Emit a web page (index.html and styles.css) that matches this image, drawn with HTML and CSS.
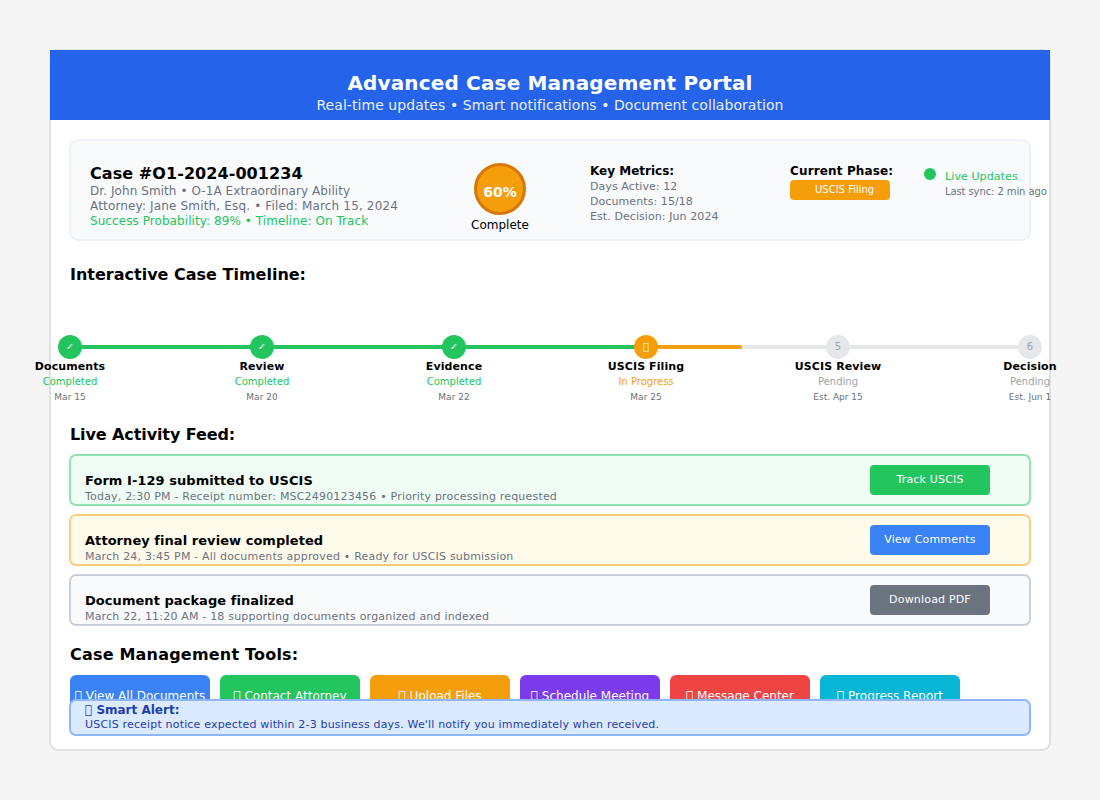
FILE: index.html
```html
<!DOCTYPE html>
<html lang="en">
<head>
<meta charset="UTF-8">
<meta name="viewport" content="width=device-width, initial-scale=1.0">
<title>Advanced Case Management Portal</title>
<link rel="stylesheet" href="styles.css">
</head>
<body>

<div class="portal">
  <header class="portal-header">
    <h1>Advanced Case Management Portal</h1>
    <p>Real-time updates • Smart notifications • Document collaboration</p>
  </header>

  <main class="portal-body">
    <section class="case-card">
      <div class="case-info">
        <h2>Case #O1-2024-001234</h2>
        <p>Dr. John Smith • O-1A Extraordinary Ability</p>
        <p class="case-attorney">Attorney: Jane Smith, Esq. • Filed: March 15, 2024</p>
        <p class="text-green">Success Probability: 89% • Timeline: On Track</p>
      </div>
      <div class="case-progress">
        <div class="progress-ring">60%</div>
        <div class="progress-label">Complete</div>
      </div>
      <div class="case-metrics">
        <h3>Key Metrics:</h3>
        <p>Days Active: 12</p>
        <p>Documents: 15/18</p>
        <p>Est. Decision: Jun 2024</p>
      </div>
      <div class="case-phase">
        <h3>Current Phase:</h3>
        <div class="phase-pill">USCIS Filing</div>
      </div>
      <div class="case-live">
        <span class="live-dot"></span>
        <div class="live-text">
          <div class="live-title">Live Updates</div>
          <div class="live-sync">Last sync: 2 min ago</div>
        </div>
      </div>
    </section>

    <h2 class="section-title title-timeline">Interactive Case Timeline:</h2>
    <section class="timeline">
      <div class="track track-done"></div>
      <div class="track track-active"></div>
      <div class="track track-pending"></div>

      <div class="step step-done">
        <div class="step-node">✓</div>
        <div class="step-name">Documents</div>
        <div class="step-status">Completed</div>
        <div class="step-date">Mar 15</div>
      </div>
      <div class="step step-done">
        <div class="step-node">✓</div>
        <div class="step-name">Review</div>
        <div class="step-status">Completed</div>
        <div class="step-date">Mar 20</div>
      </div>
      <div class="step step-done">
        <div class="step-node">✓</div>
        <div class="step-name">Evidence</div>
        <div class="step-status">Completed</div>
        <div class="step-date">Mar 22</div>
      </div>
      <div class="step step-active">
        <div class="step-node">&#xE000;</div>
        <div class="step-name">USCIS Filing</div>
        <div class="step-status">In Progress</div>
        <div class="step-date">Mar 25</div>
      </div>
      <div class="step step-pending">
        <div class="step-node">5</div>
        <div class="step-name">USCIS Review</div>
        <div class="step-status">Pending</div>
        <div class="step-date">Est. Apr 15</div>
      </div>
      <div class="step step-pending">
        <div class="step-node">6</div>
        <div class="step-name">Decision</div>
        <div class="step-status">Pending</div>
        <div class="step-date">Est. Jun 1</div>
      </div>
    </section>

    <h2 class="section-title title-feed">Live Activity Feed:</h2>
    <section class="feed">
      <div class="feed-item feed-green">
        <div class="feed-text">
          <h4>Form I-129 submitted to USCIS</h4>
          <p>Today, 2:30 PM - Receipt number: MSC2490123456 • Priority processing requested</p>
        </div>
        <button class="feed-btn btn-green">Track USCIS</button>
      </div>
      <div class="feed-item feed-yellow">
        <div class="feed-text">
          <h4>Attorney final review completed</h4>
          <p>March 24, 3:45 PM - All documents approved • Ready for USCIS submission</p>
        </div>
        <button class="feed-btn btn-blue">View Comments</button>
      </div>
      <div class="feed-item feed-gray">
        <div class="feed-text">
          <h4>Document package finalized</h4>
          <p>March 22, 11:20 AM - 18 supporting documents organized and indexed</p>
        </div>
        <button class="feed-btn btn-gray">Download PDF</button>
      </div>
    </section>

    <h2 class="section-title title-tools">Case Management Tools:</h2>
    <section class="tools">
      <button class="tool-btn btn-blue">&#xE000; View All Documents</button>
      <button class="tool-btn btn-green">&#xE000; Contact Attorney</button>
      <button class="tool-btn btn-orange">&#xE000; Upload Files</button>
      <button class="tool-btn btn-purple">&#xE000; Schedule Meeting</button>
      <button class="tool-btn btn-red">&#xE000; Message Center</button>
      <button class="tool-btn btn-cyan">&#xE000; Progress Report</button>
    </section>
  </main>

  <aside class="smart-alert">
    <div class="alert-title">&#xE000; Smart Alert:</div>
    <div class="alert-text">USCIS receipt notice expected within 2-3 business days. We'll notify you immediately when received.</div>
  </aside>
</div>

</body>
</html>
```

FILE: styles.css
```css
* {
  box-sizing: border-box;
}
html, body {
  overflow: hidden;
}
body {
  margin: 0;
  height: 800px;
  background-color: #f5f5f5;
  font-family: "DejaVu Sans", sans-serif;
  color: #000;
}
h1, h2, h3, h4, p {
  margin: 0;
}
.portal {
  position: relative;
  width: 1002px;
  height: 702px;
  margin: 49px 0 0 49px;
  background-color: #fff;
  border: 2px solid #e0e0e0;
  border-radius: 9px;
}
.portal-header {
  height: 70px;
  margin: -1px -1px 0;
  padding-top: 21px;
  background-color: #2563eb;
  color: #fff;
  text-align: center;
}
.portal-header h1 {
  font-size: 20px;
  line-height: 24px;
  letter-spacing: 0.16px;
}
.portal-header p {
  font-size: 14px;
  line-height: 20px;
  letter-spacing: 0.06px;
  opacity: 0.9;
}
.portal-body {
  padding: 19px 18px 0;
}

/* case summary */
.case-card {
  display: flex;
  height: 102px;
  background-color: #f8fafc;
  border: 2px solid #eef2f6;
  border-radius: 9px;
  font-size: 12px;
  line-height: 15px;
  color: #6b7280;
}
.case-card > div {
  flex: none;
}
.case-info {
  width: 369px;
  padding: 23px 0 0 19px;
  letter-spacing: 0.07px;
}
.case-info h2 {
  font-size: 16px;
  line-height: 20px;
  color: #000;
}
.case-info .case-attorney {
  letter-spacing: 0.157px;
}
.text-green {
  color: #22c55e;
}
.case-progress {
  display: flex;
  flex-direction: column;
  align-items: center;
  width: 120px;
  padding-top: 22px;
}
.progress-ring {
  width: 52px;
  height: 52px;
  padding-top: 3px;
  background-color: #f59e0b;
  border: 3px solid #d97706;
  border-radius: 50%;
  color: #fff;
  font-size: 14px;
  font-weight: bold;
  line-height: 46px;
  text-align: center;
}
.progress-label {
  margin-top: 3px;
  color: #000;
}
.case-metrics {
  width: 230px;
  padding: 22px 0 0 30px;
  font-size: 11px;
}
.case-metrics h3, .case-phase h3 {
  font-size: 12px;
  line-height: 16px;
  color: #000;
}
.case-metrics p {
  line-height: 15px;
  letter-spacing: 0.08px;
}
.case-phase {
  width: 134px;
  padding-top: 22px;
}
.case-phase h3 {
  line-height: 17px;
  letter-spacing: 0.14px;
}
.phase-pill {
  width: 100px;
  height: 20px;
  padding-left: 25px;
  background-color: #f59e0b;
  border-radius: 4px;
  color: #fff;
  font-size: 10px;
  line-height: 19px;
}
.case-live {
  display: flex;
  padding-top: 27px;
}
.live-dot {
  width: 12px;
  height: 12px;
  margin-right: 9px;
  background-color: #22c55e;
  border-radius: 50%;
}
.live-text {
  padding-top: 1px;
  white-space: nowrap;
}
.live-title {
  font-size: 11px;
  line-height: 15px;
  letter-spacing: 0.1px;
  color: #22c55e;
}
.live-sync {
  font-size: 10px;
  line-height: 15px;
  letter-spacing: -0.1px;
}

/* section headings */
.section-title {
  margin-left: 1px;
  font-size: 16px;
  line-height: 20px;
}
.title-timeline {
  margin-top: 24px;
}
.title-feed {
  margin-top: 6px;
  letter-spacing: -0.1px;
}
.title-tools {
  margin-top: 19px;
  letter-spacing: 0.2px;
}

/* timeline */
.timeline {
  position: relative;
  display: flex;
  justify-content: space-between;
  height: 84px;
  margin: 50px -11px 0;
}
.track {
  position: absolute;
  top: 10px;
  height: 4px;
}
.track-done {
  left: 12px;
  width: 576px;
  background-color: #22c55e;
}
.track-active {
  left: 588px;
  width: 96px;
  background-color: #f59e0b;
  border-radius: 0 2px 2px 0;
  z-index: 1;
}
.track-pending {
  left: 588px;
  right: 12px;
  background-color: #e5e7eb;
}
.step {
  position: relative;
  z-index: 2;
  display: flex;
  flex-direction: column;
  align-items: center;
  width: 24px;
  white-space: nowrap;
  text-align: center;
}
.step-node {
  width: 24px;
  height: 24px;
  border-radius: 50%;
  color: #fff;
  font-size: 10px;
  line-height: 24px;
}
.step-name {
  font-size: 11px;
  font-weight: bold;
  line-height: 15px;
  letter-spacing: 0.1px;
}
.step-status {
  font-size: 10px;
  line-height: 15px;
}
.step-date {
  font-size: 9px;
  line-height: 16px;
  color: #6b7280;
}
.step-done .step-node {
  background-color: #22c55e;
}
.step-done .step-status {
  color: #22c55e;
}
.step-active .step-node {
  background-color: #f59e0b;
}
.step-active .step-status {
  color: #f59e0b;
}
.step-pending .step-node {
  background-color: #e5e7eb;
  color: #9ca3af;
}
.step-pending .step-status {
  color: #9ca3af;
}

/* activity feed */
.feed {
  margin-top: 9px;
}
.feed-item {
  display: flex;
  justify-content: space-between;
  height: 52px;
  margin-bottom: 8px;
  padding: 9px 39px 0 14px;
  border: 2px solid;
  border-radius: 7px;
}
.feed-green {
  background-color: #f0fdf4;
  border-color: #8fe2ae;
}
.feed-yellow {
  background-color: #fffbeb;
  border-color: #fbcc80;
}
.feed-gray {
  background-color: #f8fafc;
  border-color: #c8d0dc;
}
.feed-text {
  padding-top: 8px;
}
.feed-text h4 {
  font-size: 13px;
  line-height: 16px;
  letter-spacing: 0.05px;
}
.feed-text p {
  font-size: 11px;
  line-height: 16px;
  letter-spacing: 0.19px;
  color: #6b7280;
}
.feed-btn {
  width: 120px;
  height: 30px;
  padding: 0 0 2px;
  border: none;
  border-radius: 4px;
  color: #fff;
  font-family: inherit;
  font-size: 11px;
  letter-spacing: 0.18px;
}
.btn-green {
  background-color: #22c55e;
}
.btn-blue {
  background-color: #3b82f6;
}
.btn-gray {
  background-color: #6b7280;
}
.btn-orange {
  background-color: #f59e0b;
}
.btn-purple {
  background-color: #7c3aed;
}
.btn-red {
  background-color: #ef4444;
}
.btn-cyan {
  background-color: #06b6d4;
}

/* tools */
.tools {
  display: flex;
  gap: 10px;
  margin: 10px 0 0 1px;
}
.tool-btn {
  width: 140px;
  height: 40px;
  padding: 2px 0 0;
  border: none;
  border-radius: 6px;
  color: #fff;
  font-family: inherit;
  font-size: 12px;
  white-space: nowrap;
}

/* alert sits over the tool row */
.smart-alert {
  position: absolute;
  left: 18px;
  top: 648px;
  width: 962px;
  height: 37px;
  padding: 2px 0 0 14px;
  background-color: #dbeafe;
  border: 2px solid #8fb6fb;
  border-radius: 7px;
}
.alert-title {
  font-size: 12px;
  font-weight: bold;
  line-height: 15px;
  color: #1e40af;
}
.alert-text {
  font-size: 11px;
  line-height: 14px;
  letter-spacing: 0.175px;
  color: #1e40af;
}
```
